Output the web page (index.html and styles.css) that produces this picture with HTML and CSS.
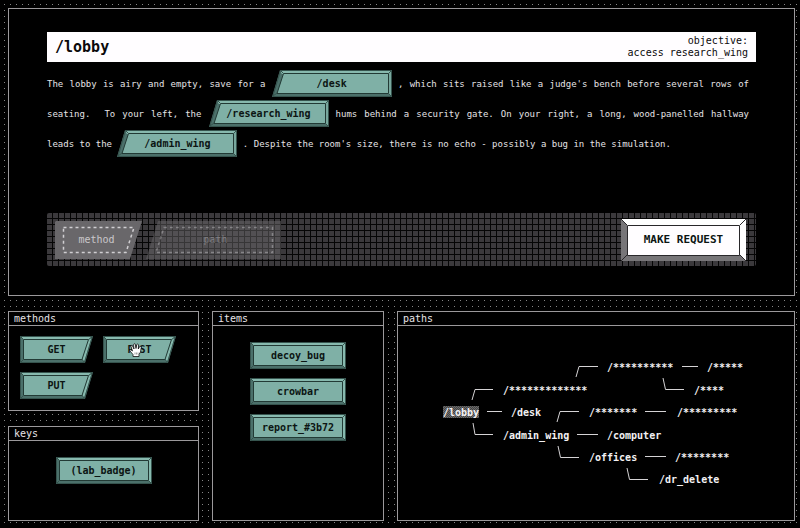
FILE: index.html
```html
<!DOCTYPE html>
<html lang="en">
<head>
<meta charset="utf-8">
<title>/lobby</title>
<link rel="stylesheet" href="styles.css">
</head>
<body>
<svg class="defs" aria-hidden="true">
  <symbol id="path-tile" viewBox="0 0 120 27" preserveAspectRatio="none">
    <path fill="#4b706a" d="M8 0H120V27H0Z"/>
    <path fill="#87b9ae" d="M8 1H119L116 4H10Z"/>
    <path fill="#78a79d" d="M119 1V26L116 23V4Z"/>
    <path fill="#7fb0a6" stroke="#223a35" d="M11.500 3.500H116.500V23.500H5Z"/>
    <path fill="none" stroke="#36544e" d="M8.500 .5H119.500V26.500H.8ZM8 0L12 4M119 1L116 4M119 26L116 23M1 26L5 23"/>
  </symbol>
  <symbol id="method-tile" viewBox="0 0 73 27" preserveAspectRatio="none">
    <path fill="#4b706a" d="M0 0H73L65 27H0Z"/>
    <path fill="#87b9ae" d="M1 1H71L68 4H4Z"/>
    <path fill="#87b9ae" d="M72 1L64 26L62 23L68 4Z"/>
    <path fill="#7fb0a6" stroke="#223a35" d="M3.500 3.500H68.500L62 23.500H3.500Z"/>
    <path fill="none" stroke="#36544e" d="M.5 .5H72.300L64.500 26.500H.5ZM1 1L4 4M72 1L68 4M64 26L62 23M1 26L4 23"/>
  </symbol>
  <symbol id="item-tile" viewBox="0 0 96 27" preserveAspectRatio="none">
    <path fill="#4b706a" d="M0 0H96V27H0Z"/>
    <path fill="#87b9ae" d="M1 1H95L92 4H4Z"/>
    <path fill="#87b9ae" d="M95 1V26L92 23V4Z"/>
    <path fill="#7fb0a6" stroke="#223a35" d="M3.500 3.500H92.500V23.500H3.500Z"/>
    <path fill="none" stroke="#36544e" d="M.5 .5H95.500V26.500H.5ZM1 1L4 4M95 1L92 4M95 26L92 23M1 26L4 23"/>
  </symbol>
</svg>

<main class="stage">
  <section class="panel room">
    <header class="room-head">
      <h1>/lobby</h1>
      <p class="objective">objective:<br>access research_wing</p>
    </header>
    <p class="story">The lobby is airy and empty, save for a <button class="tile tile-path"><svg><use href="#path-tile"/></svg><span>/desk</span></button> , which sits raised like a judge's bench before several rows of seating.&nbsp; To your left, the <button class="tile tile-path"><svg><use href="#path-tile"/></svg><span>/research_wing</span></button> hums behind a security gate. On your right, a long, wood-panelled hallway leads to the <button class="tile tile-path"><svg><use href="#path-tile"/></svg><span>/admin_wing</span></button> . Despite the room's size, there is no echo - possibly a bug in the simulation.</p>
    <div class="request-bar">
      <div class="slot slot-method">
        <svg viewBox="0 0 87 38" preserveAspectRatio="none"><path fill="#69676a" d="M1 0H87L75 38H0V1Z"/><path fill="none" stroke="#d0ced1" stroke-width="1.500" stroke-dasharray="3 3" d="M8.500 6.500H79L71 31.500H8.500Z"/></svg>
        <span>method</span>
      </div>
      <div class="slot slot-path">
        <svg viewBox="0 0 135 38" preserveAspectRatio="none"><path fill="#69676a" d="M12 0H135V38H0Z"/><path fill="none" stroke="#d0ced1" stroke-width="1.500" stroke-dasharray="3 3" d="M18 6.500H126.500V31.500H10Z"/></svg>
        <span>path</span>
      </div>
      <button class="send">
        <svg viewBox="0 0 125 42" preserveAspectRatio="none">
          <path fill="#fff" d="M0 0H125V42H0Z"/>
          <path fill="#777578" d="M0 0V42H125L119 36H6V6Z"/>
          <path fill="#fffdff" stroke="#29272a" d="M6.500 6.500H118.500V36.500H6.500Z"/>
          <path fill="none" stroke="#29272a" d="M0 0L6 6M125 0L119 6M125 42L119 36M0 42L6 36"/>
        </svg>
        <span>MAKE REQUEST</span>
      </button>
    </div>
  </section>
</main>

<div class="deck">
  <div class="side">
    <section class="panel">
      <h2>methods</h2>
      <div class="methods">
        <button class="tile tile-method"><svg><use href="#method-tile"/></svg><span>GET</span></button>
        <button class="tile tile-method"><svg><use href="#method-tile"/></svg><span>POST</span>
          <svg class="hand" viewBox="0 0 13 14"><path fill="#fff" stroke="#111" stroke-width=".8" stroke-linejoin="round" d="M4 13.500V11.500L1 8Q.3 6.500 1.500 6.500L3.500 8L2 3.500Q2 2 3.200 2.300L5 6L4.500 1.500Q5 .2 6.200 1L7 5.500L7.800 1.500Q8.800 .5 9.500 1.700L9.300 6L10.800 3.300Q12.300 3 12.200 4.500L11.500 9L10 11.500V13.500Z"/><path stroke="#444" stroke-width=".5" d="M6 9.500V11.500M7.500 9.500V11.500M9 9.500V11.500"/></svg></button>
        <button class="tile tile-method"><svg><use href="#method-tile"/></svg><span>PUT</span></button>
      </div>
    </section>
    <section class="panel">
      <h2>keys</h2>
      <div class="stack">
        <button class="tile tile-item"><svg><use href="#item-tile"/></svg><span>(lab_badge)</span></button>
      </div>
    </section>
  </div>
  <section class="panel">
    <h2>items</h2>
    <div class="stack">
      <button class="tile tile-item"><svg><use href="#item-tile"/></svg><span>decoy_bug</span></button>
      <button class="tile tile-item"><svg><use href="#item-tile"/></svg><span>crowbar</span></button>
      <button class="tile tile-item"><svg><use href="#item-tile"/></svg><span>report_#3b72</span></button>
    </div>
  </section>
  <section class="panel">
    <h2>paths</h2>
    <svg class="tree" viewBox="398 326 396 194" role="img" aria-label="Path tree">
      <defs><pattern id="dither" width="2" height="2" patternUnits="userSpaceOnUse"><path fill="#444" d="M0 0h2v2H0z"/><path fill="#6c6c6c" d="M0 0h1v1H0zM1 1h1v1H1z"/></pattern></defs>
      <path class="branch" d="M472 400L475 389.500H493M473 423L475 434.500H493M487 411.500H502M576 377L579 366.500H598M682 366.500H698M663 378L665.500 389.500H684M557 422L560 411.500H579M645 411.500H666M577 434.500H598M558 446L560.500 457.500H579M645 456.500H666M627 468L629.500 479.500H648"/>
      <rect x="443" y="406" width="36" height="12" fill="url(#dither)"/>
      <text x="443" y="416">/lobby</text>
      <text x="503" y="394">/*************</text>
      <text x="511" y="416">/desk</text>
      <text x="503" y="439">/admin_wing</text>
      <text x="607" y="371">/**********</text>
      <text x="707" y="371">/*****</text>
      <text x="694" y="394">/****</text>
      <text x="589" y="416">/*******</text>
      <text x="677" y="416">/*********</text>
      <text x="607" y="439">/computer</text>
      <text x="589" y="461">/offices</text>
      <text x="675" y="461">/********</text>
      <text x="659" y="483">/dr_delete</text>
    </svg>
  </section>
</div>
</body>
</html>
```

FILE: styles.css
```css
* {
  box-sizing: border-box;
}

body {
  margin: 0;
  min-height: 100vh;
  display: flex;
  flex-direction: column;
  background: #000;
  color: #e6e3e6;
  font: 10px/12px "DejaVu Sans Mono", monospace;
}

h1, h2, p {
  margin: 0;
}

button {
  padding: 0;
  border: 0;
  background: none;
  color: #0c1513;
  font: bold 10px/12px "DejaVu Sans Mono", monospace;
  cursor: grab;
}

.defs {
  position: absolute;
  width: 0;
  height: 0;
}

/* One-pixel dots on a 6px grid */
.stage, .deck {
  background:
    linear-gradient(90deg, #000 4px, transparent 4px 5px, #000 5px) 0 0 / 6px 6px,
    linear-gradient(#000 4px, #858585 4px 5px, #000 5px) 0 0 / 6px 6px;
}

.stage {
  padding: 8px 5px 0 8px;
}

.panel {
  border: 1px solid #9b999b;
  background: #000;
}

.panel h2 {
  height: 14px;
  padding-left: 5px;
  border-bottom: 1px solid #9b999b;
  font-size: 10px;
  font-weight: normal;
  line-height: 13px;
}

.room {
  padding: 23px 38px 29px;
}

.room-head {
  display: flex;
  align-items: center;
  justify-content: space-between;
  height: 30px;
  padding: 0 8px;
  background: #fffdff;
  color: #0c0a0c;
}

.room-head h1 {
  font-size: 15px;
  line-height: 30px;
}

.objective {
  text-align: right;
}

.story {
  margin: 7px 0 54px;
  padding-right: 7px;
  font-size: 9px;
  line-height: 30px;
  text-align: justify;
}

.tile {
  position: relative;
  height: 27px;
}

.tile svg, .slot svg, .send svg {
  position: absolute;
  inset: 0;
  width: 100%;
  height: 100%;
}

.tile > span, .slot span, .send span {
  position: relative;
}

.tile-path {
  width: 120px;
  margin-bottom: 2px;
  vertical-align: middle;
}

.tile-method {
  width: 73px;
}

.tile-item {
  width: 96px;
}

.tile .hand {
  inset: 7px auto auto 26px;
  width: 13px;
  height: 14px;
}

.request-bar {
  display: flex;
  align-items: center;
  gap: 4px;
  height: 53px;
  padding: 0 10px 0 8px;
  border-radius: 2px;
  background:
    linear-gradient(90deg, transparent 5px, #050505 5px) 0 0 / 6px 6px,
    linear-gradient(#3b393c 5px, #050505 5px) 0 0 / 6px 6px;
}

.slot {
  position: relative;
  height: 38px;
  color: #c9c7ca;
  line-height: 38px;
  text-align: center;
}

.slot-method {
  width: 87px;
  padding-right: 4px;
}

.slot-path {
  width: 135px;
  padding-left: 4px;
  opacity: 0.5;
}

.send {
  position: relative;
  width: 125px;
  height: 42px;
  margin-left: auto;
  font-size: 11px;
}

.deck {
  flex: 1;
  display: grid;
  grid-template-columns: 191fr 172fr 398fr;
  gap: 13px;
  padding: 15px 5px 7px 8px;
}

.side {
  display: grid;
  grid-template-rows: 100fr 95fr;
  gap: 15px;
}

.methods {
  display: flex;
  flex-wrap: wrap;
  gap: 9px 10px;
  padding: 10px 11px;
}

.stack {
  display: flex;
  flex-direction: column;
  align-items: center;
  gap: 9px;
  padding-top: 16px;
}

.tree {
  display: block;
  width: 100%;
}

.tree text {
  fill: #f3f1f3;
  font: bold 10px "DejaVu Sans Mono", monospace;
}

.branch {
  fill: none;
  stroke: #d5d3d5;
}
```
